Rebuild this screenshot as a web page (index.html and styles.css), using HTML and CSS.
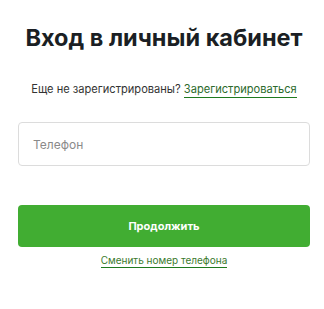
FILE: index.html
```html
<!DOCTYPE html>
<html lang="ru">
<head>
  <meta charset="UTF-8" />
  <meta name="viewport" content="width=device-width, initial-scale=1.0" />
  <title>Вход в личный кабинет</title>
  <link rel="stylesheet" href="styles.css">
</head>
<body>
  <div class="container">
    <h1>Вход в личный кабинет</h1>
    <p class="register">Еще не зарегистрированы? <a href="#">Зарегистрироваться</a></p>
    <input class="phone" type="tel" placeholder="Телефон">
    <button class="submit-btn">Продолжить</button>
    <a class="change-link" href="#">Сменить номер телефона</a>
  </div>
</body>
</html>
```

FILE: styles.css
```css
body {
  font-family: Inter, "Noto Sans", sans-serif;
  background: white;
  margin: 0;
  color: #1b1f24;
}
.container {
  padding: 0 14px 0 18px;
  display: flex;
  flex-direction: column;
  align-items: center;
}
h1 {
  font-size: 23.5px;
  font-weight: 700;
  margin: 24px 0 0;
  line-height: 28px;
}
.register {
  font-size: 11.1px;
  margin: 30px 0 0;
  color: #333;
  line-height: 14px;
}
.register a {
  color: #2c6a2c;
  text-decoration: none;
  border-bottom: 1px solid #1e7a1e;
  padding-bottom: 1px;
}
.phone {
  box-sizing: border-box;
  width: 100%;
  height: 44px;
  margin-top: 26px;
  padding: 0 14px;
  border: 1px solid #dcdcdc;
  border-radius: 4px;
  font-family: inherit;
  font-size: 12px;
  outline: none;
}
.phone::placeholder {
  color: #8a8a8a;
}
.submit-btn {
  width: 100%;
  height: 42px;
  margin-top: 39px;
  border: none;
  border-radius: 4px;
  background: #41ad32;
  color: white;
  font-family: inherit;
  font-size: 11px;
  font-weight: 700;
  cursor: pointer;
}
.change-link {
  margin-top: 7px;
  font-size: 10px;
  color: #3a7a2e;
  text-decoration: none;
  border-bottom: 1px solid #1e7a1e;
  line-height: 13px;
}
```
